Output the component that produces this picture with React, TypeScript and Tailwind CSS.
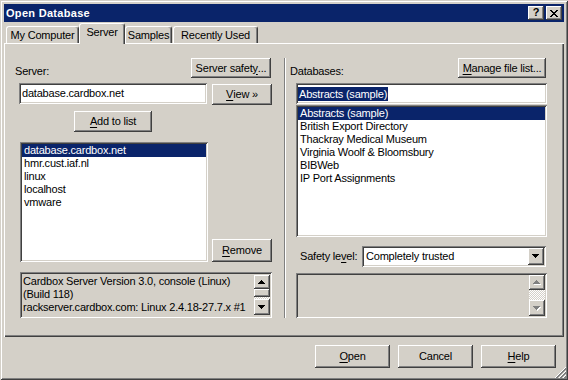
import React from "react";

const raised =
  "bg-[#d4d0c8] shadow-[inset_-1px_-1px_0_#404040,inset_1px_1px_0_#ffffff,inset_-2px_-2px_0_#808080]";
const sunken =
  "shadow-[inset_1px_1px_0_#808080,inset_-1px_-1px_0_#ffffff,inset_2px_2px_0_#404040,inset_-2px_-2px_0_#d4d0c8]";
const checker =
  "bg-[image:repeating-conic-gradient(#ffffff_0_25%,#d4d0c8_0_50%)] bg-[length:2px_2px]";

function Btn({ children, className = "" }: { children: React.ReactNode; className?: string }) {
  return (
    <button type="button" className={`flex shrink-0 items-center justify-center ${raised} ${className}`}>
      {children}
    </button>
  );
}

function U({ children }: { children: string }) {
  return <span className="underline underline-offset-[2px]">{children}</span>;
}

function Arrow({ dir, disabled = false }: { dir: "up" | "down"; disabled?: boolean }) {
  const d =
    dir === "up"
      ? "M3 0h1v1H3zM2 1h3v1H2zM1 2h5v1H1zM0 3h7v1H0z"
      : "M0 0h7v1H0zM1 1h5v1H1zM2 2h3v1H2zM3 3h1v1H3z";
  return (
    <svg width="8" height="5" viewBox="0 0 8 5" shapeRendering="crispEdges">
      {disabled && <path d={d} fill="#ffffff" transform="translate(1 1)" />}
      <path d={d} fill={disabled ? "#808080" : "#000000"} />
    </svg>
  );
}

function Tab({ label, className, active = false }: { label: string; className: string; active?: boolean }) {
  return (
    <div
      className={`relative flex justify-center rounded-t-[3px] border-t border-l border-r border-t-white border-l-white border-r-[#404040] bg-[#d4d0c8] pt-[2px] shadow-[inset_-1px_0_0_#808080] ${
        active ? "z-10 -mb-[1px] h-[21px]" : "h-[17px]"
      } ${className}`}
    >
      {label}
    </div>
  );
}

function ListBox({ items, className }: { items: string[]; className: string }) {
  return (
    <div className={`shrink-0 bg-white p-[2px] ${sunken} ${className}`}>
      {items.map((it, i) => (
        <div key={it} className={`h-[13px] px-[2px] whitespace-nowrap ${i === 0 ? "bg-[#0a246a] text-white" : ""}`}>
          {it}
        </div>
      ))}
    </div>
  );
}

export default function App() {
  return (
    <div className="relative flex h-[380px] w-[568px] flex-col bg-[#d4d0c8] p-[4px] font-['Liberation_Sans',Arial,sans-serif] text-[11px] leading-[13px] tracking-[-0.2px] text-black shadow-[inset_1px_1px_0_#d4d0c8,inset_-1px_-1px_0_#404040,inset_2px_2px_0_#ffffff,inset_-2px_-2px_0_#808080]">
      {/* title bar */}
      <div className="flex h-[18px] items-center bg-[#0a246a] px-[2px]">
        <span className="flex-1 font-bold tracking-[0.3px] text-white">Open Database</span>
        <div className="flex gap-[2px]">
          <div className={`flex h-[14px] w-[16px] items-center justify-center pb-[1px] font-bold ${raised}`}>?</div>
          <div className={`flex h-[14px] w-[16px] items-center justify-center ${raised}`}>
            <svg width="8" height="7" viewBox="0 0 8 7" shapeRendering="crispEdges">
              <path
                d="M0 0h2v1H0zM6 0h2v1H6zM1 1h2v1H1zM5 1h2v1H5zM2 2h4v1H2zM3 3h2v1H3zM2 4h4v1H2zM1 5h2v1H1zM5 5h2v1H5zM0 6h2v1H0zM6 6h2v1H6z"
                fill="#000"
              />
            </svg>
          </div>
        </div>
      </div>

      {/* tabs */}
      <div className="mt-[1px] flex h-[20px] items-end pl-[2px]">
        <Tab label="My Computer" className="w-[73px]" />
        <Tab label="Server" className="w-[46px]" active />
        <Tab label="Samples" className="w-[47px]" />
        <Tab label="Recently Used" className="ml-[1px] w-[85px]" />
      </div>

      {/* panel */}
      <div className="flex h-[294px] shadow-[inset_1px_1px_0_#ffffff,inset_-1px_-1px_0_#404040,inset_-2px_-2px_0_#808080]">
        {/* left column */}
        <div className="flex w-[280px] shrink-0 flex-col pt-[15px]">
          <div className="flex h-[20px] items-end justify-between pr-[13px] pl-[11px]">
            <span>Server:</span>
            <Btn className="h-[20px] w-[80px]">
              Server safet<U>y</U>...
            </Btn>
          </div>
          <div className="mt-[5px] flex items-start gap-[5px] pl-[15px]">
            <div className={`flex h-[21px] w-[188px] items-center bg-white px-[3px] ${sunken}`}>database.cardbox.net</div>
            <Btn className="mt-[1px] h-[21px] w-[60px]">
              <U>V</U>iew »
            </Btn>
          </div>
          <Btn className="mt-[6px] ml-[70px] h-[21px] w-[78px]">
            <U>A</U>dd to list
          </Btn>
          <div className="mt-[10px] flex items-end pl-[16px]">
            <ListBox
              className="h-[120px] w-[188px]"
              items={["database.cardbox.net", "hmr.cust.iaf.nl", "linux", "localhost", "vmware"]}
            />
            <Btn className="ml-[4px] h-[23px] w-[60px]">
              <U>R</U>emove
            </Btn>
          </div>
          <div className={`mt-[10px] ml-[16px] flex h-[46px] w-[252px] p-[2px] ${sunken}`}>
            <div className="flex-1 pt-[1px] pl-[1px] whitespace-nowrap">
              <div>Cardbox Server Version 3.0, console (Linux)</div>
              <div>(Build 118)</div>
              <div>rackserver.cardbox.com: Linux 2.4.18-27.7.x #1</div>
            </div>
            <div className="flex w-[16px] flex-col py-[1px]">
              <div className={`flex h-[14px] items-center justify-center ${raised}`}>
                <Arrow dir="up" />
              </div>
              <div className={`h-[8px] ${raised}`} />
              <div className={`flex-1 ${checker}`} />
              <div className={`flex h-[16px] items-center justify-center ${raised}`}>
                <Arrow dir="down" />
              </div>
            </div>
          </div>
        </div>

        {/* separator */}
        <div className="mt-[15px] h-[260px] w-[2px] border-l border-l-[#808080] bg-white" />

        {/* right column */}
        <div className="flex flex-1 flex-col pt-[15px] pr-[17px] pl-[10px]">
          <div className="flex h-[20px] items-end justify-between">
            <span className="-ml-[6px]">Databases:</span>
            <Btn className="mr-[1px] h-[20px] w-[88px]">
              <U>M</U>anage file list...
            </Btn>
          </div>
          <div className={`mt-[5px] flex h-[21px] items-center bg-white px-[2px] ${sunken}`}>
            <span className="bg-[#0a246a] px-[1px] leading-[14px] text-white">Abstracts (sample)</span>
          </div>
          <ListBox
            className="mt-[1px] h-[132px]"
            items={[
              "Abstracts (sample)",
              "British Export Directory",
              "Thackray Medical Museum",
              "Virginia Woolf & Bloomsbury",
              "BIBWeb",
              "IP Port Assignments",
            ]}
          />
          <div className="mt-[9px] flex h-[21px] items-center">
            <span className="ml-[4px] w-[62px] shrink-0">
              Safety le<U>v</U>el:
            </span>
            <div className={`mr-[1px] flex h-[21px] flex-1 items-center bg-white p-[2px] ${sunken}`}>
              <span className="flex-1 pl-[2px]">Completely trusted</span>
              <div className={`flex h-[17px] w-[16px] items-center justify-center ${raised}`}>
                <Arrow dir="down" />
              </div>
            </div>
          </div>
          <div className={`mt-[6px] flex h-[45px] justify-end p-[2px] ${sunken}`}>
            <div className="flex w-[16px] flex-col">
              <div className={`flex h-[15px] items-center justify-center ${raised}`}>
                <Arrow dir="up" disabled />
              </div>
              <div className={`flex-1 ${checker}`} />
              <div className={`flex h-[16px] items-center justify-center ${raised}`}>
                <Arrow dir="down" disabled />
              </div>
            </div>
          </div>
        </div>
      </div>

      {/* bottom buttons */}
      <div className="mt-[8px] flex justify-end gap-[8px] pr-[8px]">
        <Btn className="h-[23px] w-[75px]">
          <U>O</U>pen
        </Btn>
        <Btn className="h-[23px] w-[75px]">Cancel</Btn>
        <Btn className="h-[23px] w-[75px]">
          <U>H</U>elp
        </Btn>
      </div>

      {/* size grip */}
      <svg className="absolute right-[2px] bottom-[2px]" width="12" height="12" viewBox="0 0 12 12">
        {[0, 4, 8].map((o) => (
          <g key={o}>
            <line x1={o + 1} y1="12" x2="12" y2={o + 1} stroke="#ffffff" />
            <line x1={o + 2} y1="12" x2="12" y2={o + 2} stroke="#808080" />
            <line x1={o + 3} y1="12" x2="12" y2={o + 3} stroke="#808080" />
          </g>
        ))}
      </svg>
    </div>
  );
}
